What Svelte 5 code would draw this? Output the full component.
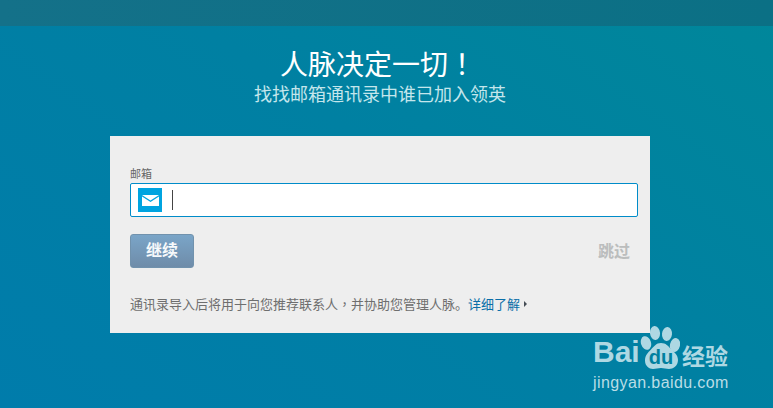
<script lang="ts">
	let email = $state('');
</script>

<div class="page">
	<div class="topbar"></div>

	<div class="content">
		<header class="intro">
			<h1>人脉决定一切<span class="tc">！</span></h1>
			<h2>找找邮箱通讯录中谁已加入领英</h2>
		</header>

		<form class="card" onsubmit={(e) => e.preventDefault()}>
			<label class="field-label" for="email">邮箱</label>
			<div class="field">
				<span class="mail-icon">
					<svg width="17" height="11" viewBox="0 0 17 11" aria-hidden="true">
						<path d="M0 0h17L8.500 5.500z" fill="#fff" />
						<path d="M0 1.500l8.500 5.500L17 1.500V11H0z" fill="#fff" />
					</svg>
				</span>
				<span class="caret"></span>
				<input id="email" type="text" bind:value={email} />
			</div>

			<div class="actions">
				<button class="continue" type="submit">继续</button>
				<span class="skip">跳过</span>
			</div>

			<p class="note">
				通讯录导入后将用于向您推荐联系人<span class="tc">，</span>并协助您管理人脉。<span class="more">详细了解</span><span class="arrow"></span>
			</p>
		</form>
	</div>

	<div class="watermark">
		<div class="wm-top">
			<span class="wm-bai">Bai</span>
			<span class="wm-paw">
				<svg width="40" height="44" viewBox="0 0 40 44" aria-hidden="true">
					<ellipse cx="6" cy="17" rx="5" ry="7" transform="rotate(-18 6 17)" />
					<ellipse cx="15" cy="7" rx="5" ry="7" transform="rotate(-6 15 7)" />
					<ellipse cx="27" cy="8" rx="5" ry="7" transform="rotate(6 27 8)" />
					<ellipse cx="35" cy="19" rx="5" ry="7" transform="rotate(14 35 19)" />
					<path d="M21 17c5 0 7 3 10 6 3 3 7 6 7 11 0 6-5 9-9 9-3 0-5-1-8-1s-5 1-8 1c-4 0-8-3-8-8.500 0-5 3-8 6-11 3-3 5-6.500 10-6.500z" />
				</svg>
				<span class="wm-du">du</span>
			</span>
			<span class="wm-cn">经验</span>
		</div>
		<div class="wm-url">jingyan.baidu.com</div>
	</div>
</div>

<style>
	:global(body) {
		margin: 0;
	}

	.page {
		position: relative;
		width: 773px;
		height: 408px;
		overflow: hidden;
		background: linear-gradient(35deg, #007cab 0%, #0080a2 55%, #00879a 100%);
		font-family: "Noto Sans CJK SC", "Liberation Sans", sans-serif;
	}

	.topbar {
		height: 26px;
		background: linear-gradient(90deg, #147189, #0b7085);
	}

	.content {
		width: 760px;
		display: flex;
		flex-direction: column;
		align-items: center;
	}

	.intro {
		margin-top: 19px;
		text-align: center;
	}

	.tc {
		font-family: "Noto Sans CJK TC", sans-serif;
	}

	h1 {
		margin: 0;
		height: 36px;
		padding-right: 4px;
		font-size: 28px;
		line-height: 36px;
		font-weight: 400;
		color: #fff;
	}

	h2 {
		margin: 0;
		height: 24px;
		font-size: 18px;
		line-height: 24px;
		font-weight: 400;
		color: #c4e6ec;
	}

	.card {
		box-sizing: border-box;
		width: 540px;
		height: 197px;
		margin-top: 31px;
		padding: 30px 12px 0 20px;
		background: #eeeeee;
	}

	.field-label {
		display: block;
		height: 17px;
		font-size: 11px;
		line-height: 15px;
		color: #666;
	}

	.field {
		position: relative;
		box-sizing: border-box;
		height: 34px;
		display: flex;
		align-items: center;
		padding-left: 7px;
		background: #fff;
		border: 1px solid #008cc9;
		border-radius: 2px;
	}

	.mail-icon {
		flex: none;
		width: 24px;
		height: 24px;
		display: flex;
		align-items: center;
		justify-content: center;
		background: #00a4e0;
	}

	.mail-icon svg {
		display: block;
	}

	.caret {
		flex: none;
		width: 1px;
		height: 20px;
		margin-left: 10px;
		background: #444;
	}

	input {
		flex: 1;
		min-width: 0;
		border: 0;
		outline: 0;
		background: transparent;
		font-size: 14px;
	}

	.actions {
		display: flex;
		align-items: flex-start;
		justify-content: space-between;
		margin-top: 17px;
		padding-right: 8px;
	}

	.continue {
		box-sizing: border-box;
		width: 64px;
		height: 34px;
		padding: 0 0 3px;
		border: 1px solid #7192ad;
		border-radius: 3px;
		background: linear-gradient(#7aa5c8, #6f8ca9);
		color: #f7f9fb;
		font-family: inherit;
		font-size: 16px;
		font-weight: 700;
		line-height: 27px;
	}

	.skip {
		margin-top: 4px;
		font-size: 16px;
		line-height: 24px;
		font-weight: 700;
		color: #bbbdbd;
	}

	.note {
		display: flex;
		align-items: center;
		margin: 26px 0 0;
		font-size: 13px;
		line-height: 20px;
		color: #6e6e6e;
	}

	.more {
		color: #0a6ea8;
	}

	.arrow {
		width: 0;
		height: 0;
		margin-left: 4px;
		border-left: 3px solid #444c55;
		border-top: 3px solid transparent;
		border-bottom: 3px solid transparent;
	}

	.watermark {
		position: absolute;
		left: 593px;
		top: 326px;
		width: 140px;
		color: #aed8e3;
		font-family: "Liberation Sans", sans-serif;
	}

	.wm-top {
		display: flex;
		align-items: flex-end;
		height: 44px;
	}

	.wm-bai {
		width: 47px;
		font-size: 30px;
		line-height: 30px;
		font-weight: 700;
		margin-bottom: 3px;
	}

	.wm-paw {
		position: relative;
		flex: none;
		width: 40px;
		height: 44px;
	}

	.wm-paw svg {
		display: block;
		fill: #aed8e3;
	}

	.wm-du {
		position: absolute;
		left: 0;
		top: 20px;
		width: 42px;
		text-align: center;
		font-size: 20px;
		line-height: 22px;
		font-weight: 700;
		color: #00809f;
	}

	.wm-cn {
		margin-left: 2px;
		font-family: "Noto Sans CJK SC", sans-serif;
		font-size: 23px;
		line-height: 30px;
		font-weight: 700;
	}

	.wm-url {
		margin-top: 4px;
		font-size: 16px;
		line-height: 18px;
		letter-spacing: 0.4px;
		color: #b9dde6;
	}
</style>
